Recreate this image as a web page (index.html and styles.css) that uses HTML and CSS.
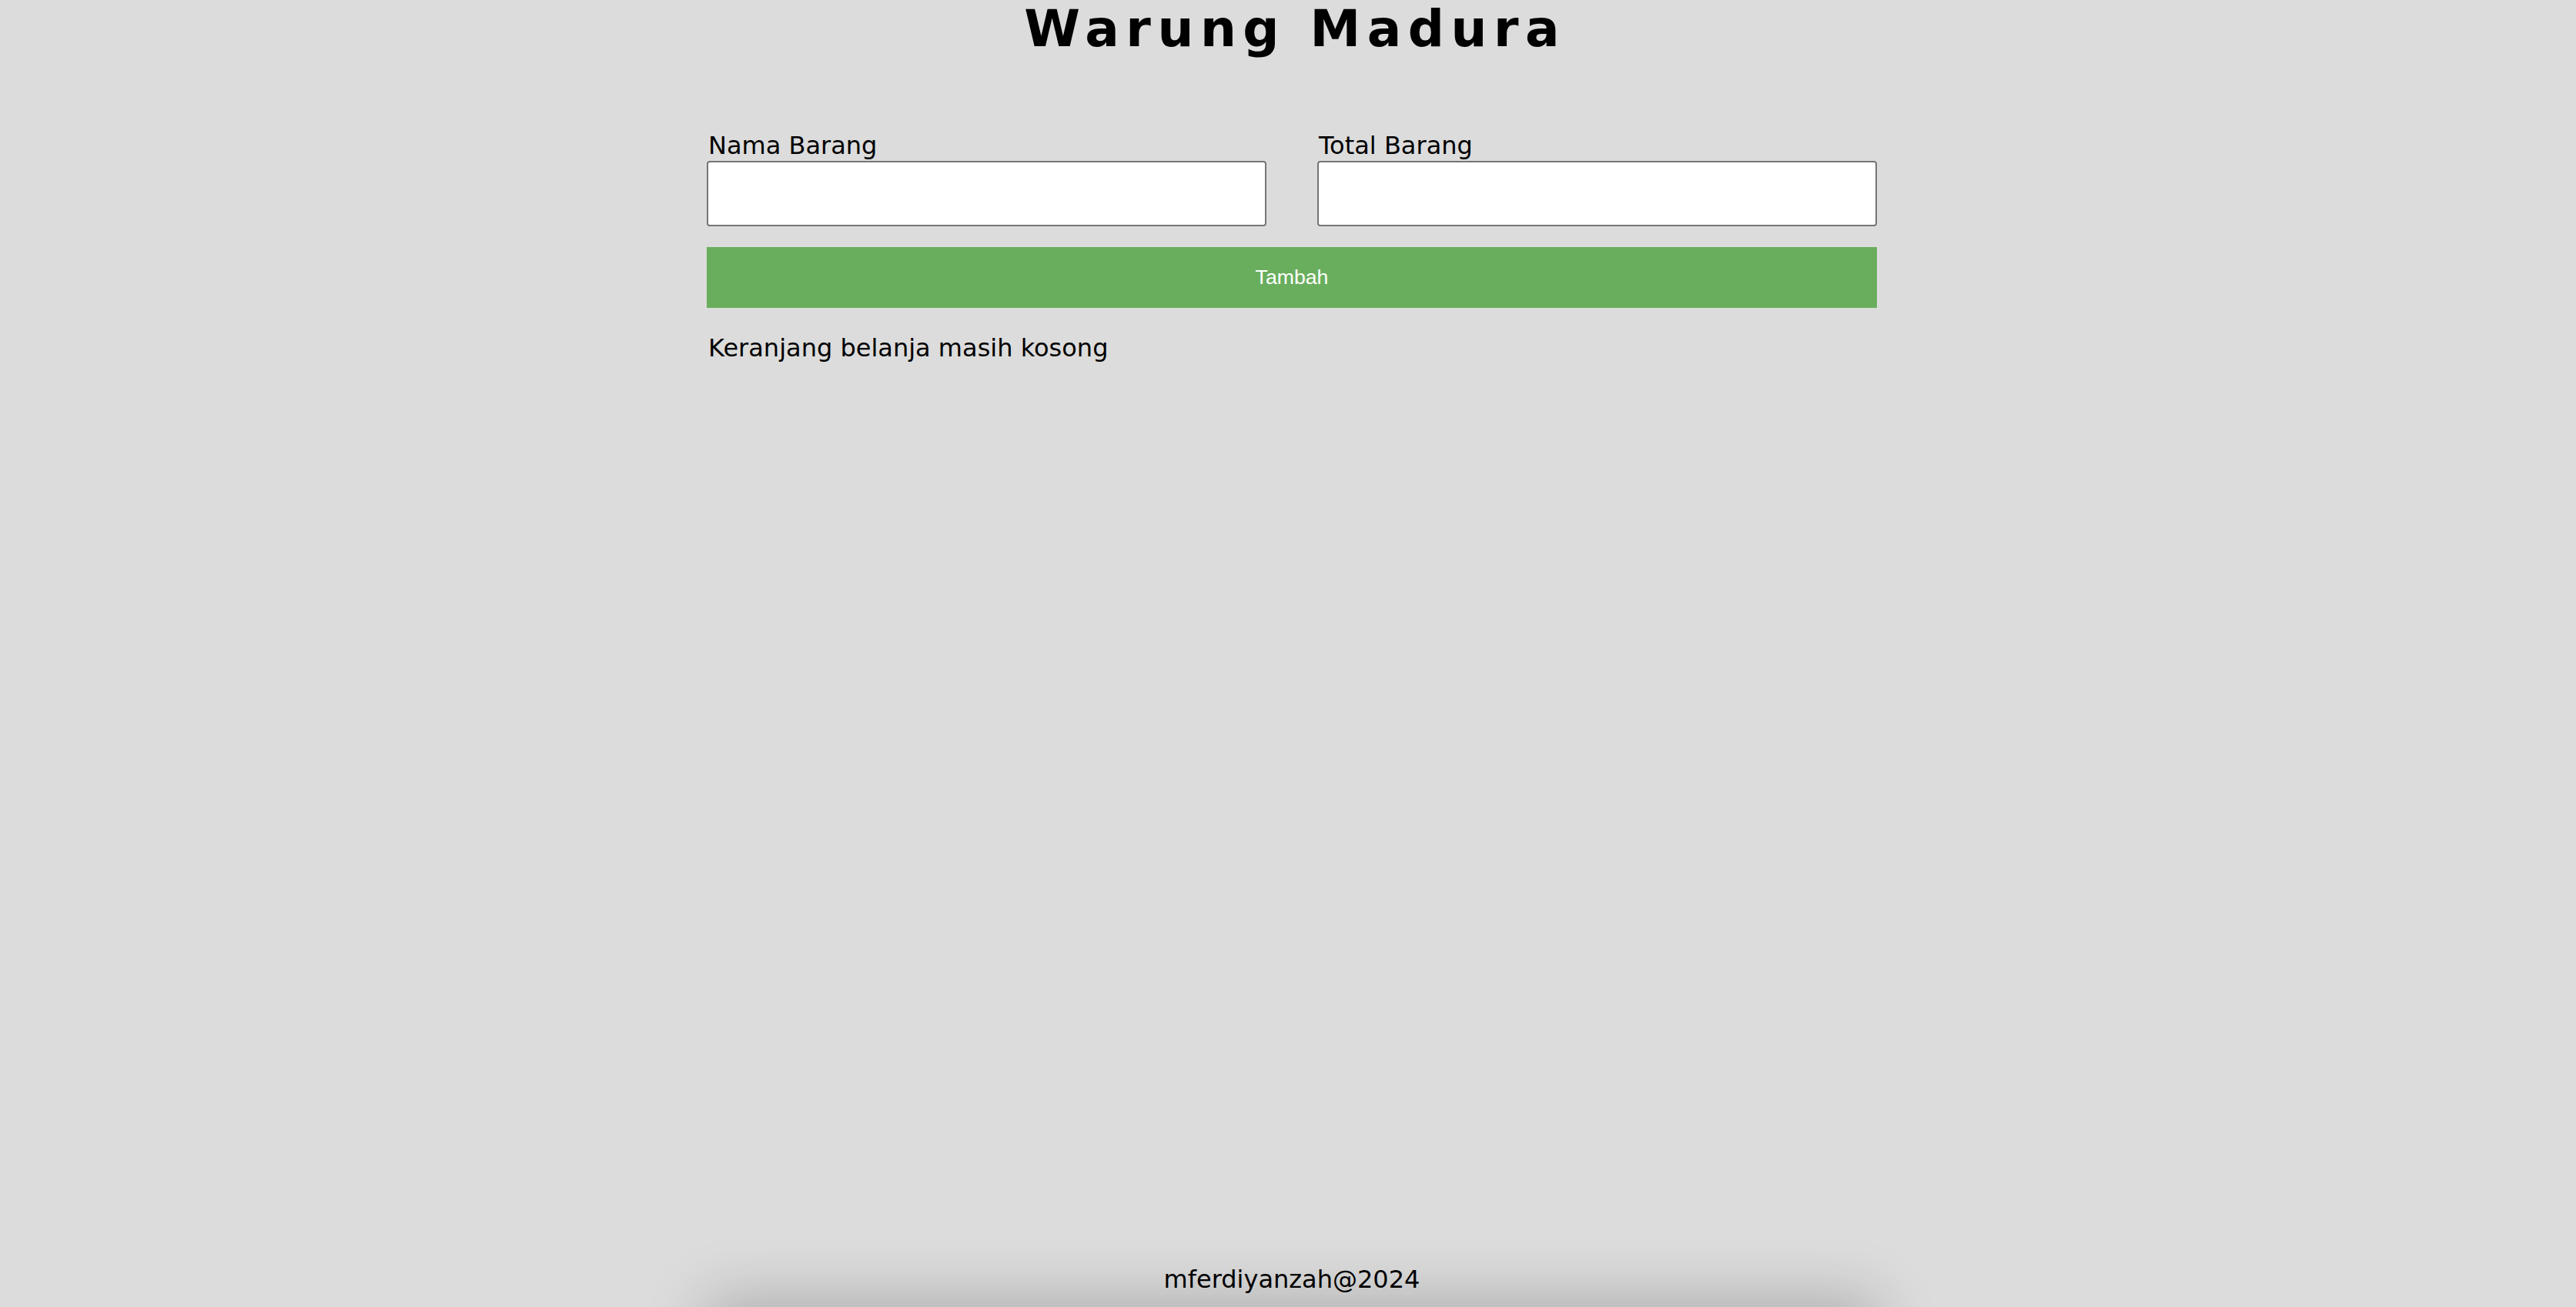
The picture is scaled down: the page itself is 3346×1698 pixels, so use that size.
FILE: index.html
```html
<!DOCTYPE html>
<html lang="id">
<head>
<meta charset="utf-8">
<title>Warung Madura</title>
<link rel="stylesheet" href="styles.css">
</head>
<body>
  <div class="page">
    <h1 class="title">Warung Madura</h1>
    <main class="container">
      <form class="form">
        <div class="fields">
          <div class="field">
            <label class="label" for="nama">Nama Barang</label>
            <input class="input" id="nama" type="text">
          </div>
          <div class="field">
            <label class="label" for="total">Total Barang</label>
            <input class="input" id="total" type="number">
          </div>
        </div>
        <button class="btn" type="button">Tambah</button>
      </form>
      <p class="empty">Keranjang belanja masih kosong</p>
    </main>
    <footer class="footer">
      <p class="footer-text">mferdiyanzah@2024</p>
    </footer>
  </div>
</body>
</html>
```
FILE: styles.css
```css
* { box-sizing: border-box; }

html, body {
  margin: 0;
  padding: 0;
  background: #dcdcdc;
}

body {
  font-family: "DejaVu Sans", "Liberation Sans", sans-serif;
  color: #000;
  overflow: hidden;
}

.page {
  min-height: 100vh;
  height: 100vh;
  display: flex;
  flex-direction: column;
  align-items: center;
  padding-left: 10px;
}

.title {
  margin: 0;
  font-size: 66px;
  line-height: 76px;
  font-weight: 700;
  letter-spacing: 8.5px;
  text-align: center;
  padding-left: 8.5px;
}

.container {
  width: 1520px;
  flex: 1;
  padding-top: 94px;
}

.form {
  display: flex;
  flex-direction: column;
  gap: 27px;
}

.fields {
  display: flex;
  gap: 66px;
}

.field {
  flex: 1;
  display: flex;
  flex-direction: column;
}

.label {
  font-size: 32px;
  line-height: 39px;
  padding-left: 2px;
}

.input {
  height: 85px;
  border: 2px solid #767676;
  border-radius: 4px;
  background: #fff;
  font-size: 28px;
  padding: 0 8px;
}

.btn {
  height: 79px;
  border: none;
  background: #69ae5d;
  color: #fff;
  font-family: "Liberation Sans", Arial, sans-serif;
  font-size: 26.67px;
  cursor: pointer;
}

.empty {
  margin: 32px 0 0;
  font-size: 32px;
  line-height: 40px;
  padding-left: 2px;
}

.footer {
  position: relative;
  width: 1520px;
  text-align: center;
}

.footer-text {
  margin: 0 0 16px;
  font-size: 32px;
  line-height: 40px;
}

.footer::after {
  content: "";
  position: absolute;
  left: 0;
  right: 0;
  top: 100%;
  height: 120px;
  box-shadow: 0 -10px 80px rgba(0, 0, 0, 0.22);
}
```
